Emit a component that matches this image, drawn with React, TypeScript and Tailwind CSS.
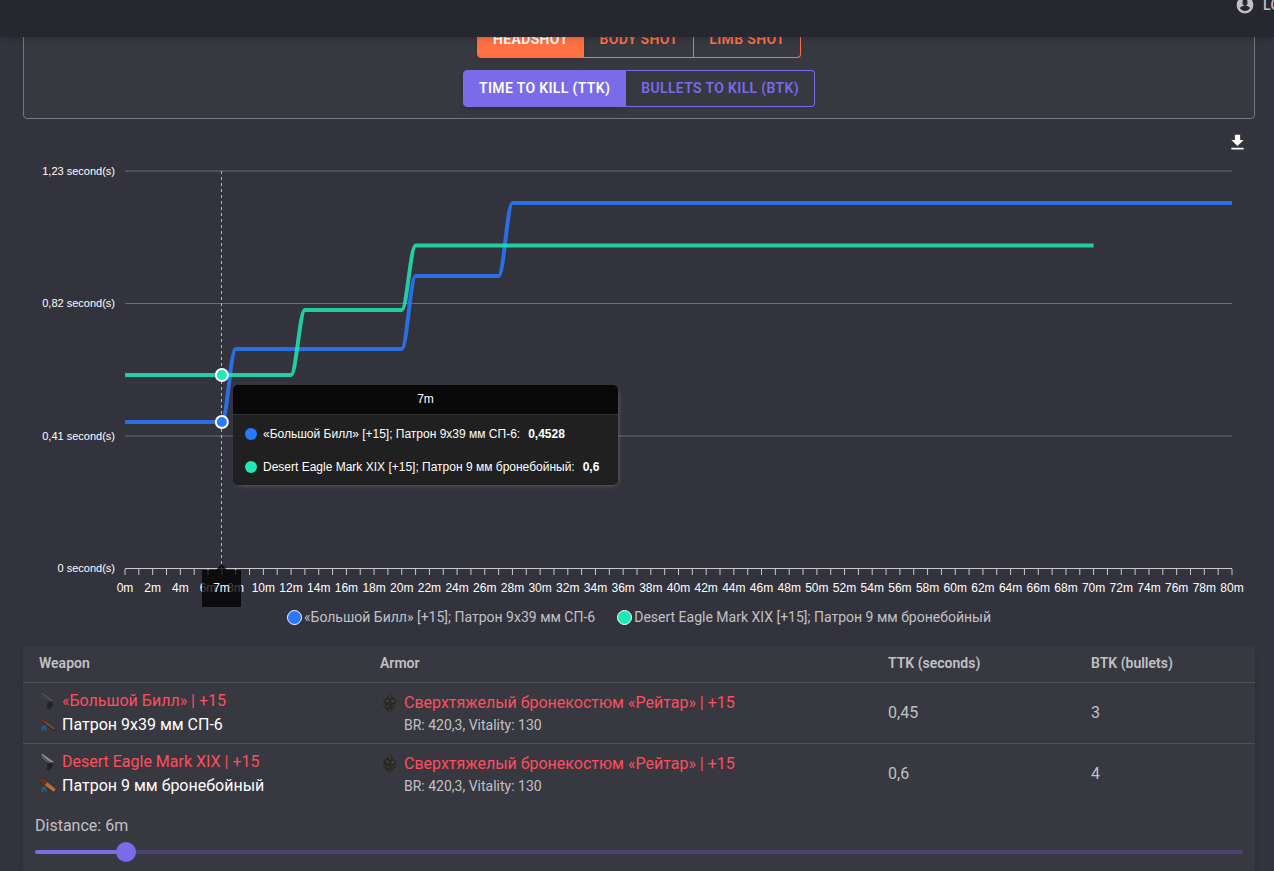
import React, { useState } from 'react';

interface Series {
  name: string;
  value: string;
  color: string;
  end: number;
  // [distance in meters, y of the plateau that starts there]
  steps: [number, number][];
}

interface ResultRow {
  weapon: string;
  ammo: string;
  armor: string;
  armorStats: string;
  ttk: string;
  btk: number;
  metal: string;
  bullet: string;
  bulletWidth: number;
}

const PLOT_LEFT = 125;
const PLOT_RIGHT = 1232;
const MAX_DISTANCE = 80;

const series: Series[] = [
  {
    name: '«Большой Билл» [+15]; Патрон 9x39 мм СП-6',
    value: '0,4528',
    color: '#2979ff',
    end: 80,
    steps: [[0, 422], [8, 349], [21, 276], [28, 203]],
  },
  {
    name: 'Desert Eagle Mark XIX [+15]; Патрон 9 мм бронебойный',
    value: '0,6',
    color: '#1de9b6',
    end: 70,
    steps: [[0, 375], [13, 310], [21, 245.5]],
  },
];

const gridLines = [
  { y: 171, label: '1,23 second(s)' },
  { y: 303.5, label: '0,82 second(s)' },
  { y: 436, label: '0,41 second(s)' },
  { y: 568.5, label: '0 second(s)' },
];

const rows: ResultRow[] = [
  {
    weapon: '«Большой Билл» | +15',
    ammo: 'Патрон 9x39 мм СП-6',
    armor: 'Сверхтяжелый бронекостюм «Рейтар» | +15',
    armorStats: 'BR: 420,3, Vitality: 130',
    ttk: '0,45',
    btk: 3,
    metal: '#4d4d50',
    bullet: '#7d4a35',
    bulletWidth: 2,
  },
  {
    weapon: 'Desert Eagle Mark XIX | +15',
    ammo: 'Патрон 9 мм бронебойный',
    armor: 'Сверхтяжелый бронекостюм «Рейтар» | +15',
    armorStats: 'BR: 420,3, Vitality: 130',
    ttk: '0,6',
    btk: 4,
    metal: '#8b8b90',
    bullet: '#b06f3c',
    bulletWidth: 4,
  },
];

const toX = (meters: number) =>
  PLOT_LEFT + (meters / MAX_DISTANCE) * (PLOT_RIGHT - PLOT_LEFT);

const buildPath = ({ steps, end }: Series) => {
  let d = `M${toX(0)} ${steps[0][1]}`;
  for (let i = 1; i < steps.length; i++) {
    const [meters, y] = steps[i];
    const prevY = steps[i - 1][1];
    const from = toX(meters - 1);
    const to = toX(meters);
    d += ` H${from} C${from + 5} ${prevY} ${to - 5} ${y} ${to} ${y}`;
  }
  return `${d} H${toX(end)}`;
};

const AccountIcon = () => (
  <svg viewBox="0 0 24 24" className="size-5" fill="currentColor" aria-hidden="true">
    <path d="M12 2C6.48 2 2 6.48 2 12s4.48 10 10 10 10-4.48 10-10S17.52 2 12 2zm0 3c1.66 0 3 1.34 3 3v2c0 1.66-1.34 3-3 3s-3-1.34-3-3V8c0-1.66 1.34-3 3-3zm0 14.2c-2.5 0-4.71-1.28-6-3.22.03-1.99 4-3.08 6-3.08s5.97 1.09 6 3.08c-1.29 1.94-3.5 3.22-6 3.22z" />
  </svg>
);

const DownloadIcon = () => (
  <svg viewBox="0 0 24 24" className="size-[21px]" fill="currentColor" aria-hidden="true">
    <path d="M19 9h-4V3H9v6H5l7 7 7-7zM5 18v2h14v-2H5z" />
  </svg>
);

const PistolIcon = ({ metal }: { metal: string }) => (
  <svg viewBox="0 0 18 20" className="h-5 w-[18px] shrink-0" aria-hidden="true">
    <path d="M2.5 2.5l1.2-.6L14.500 9.600l-.6 2.800-2.200.4L3 5.200z" fill={metal} />
    <path d="M3 4l9 7.500" stroke="#2b2b2e" strokeWidth="1" />
    <path d="M9 11l4.800-.8.200 3-2.500 5.300-4.200-1.600z" fill="#242426" />
    <path d="M7 10.500l2 1.500" stroke="#2b2b2e" strokeWidth="1" />
  </svg>
);

const BulletIcon = ({ color, width }: { color: string; width: number }) => (
  <svg viewBox="0 0 18 20" className="h-5 w-[18px] shrink-0" aria-hidden="true">
    <path d="M3 5l11.500 9" stroke="#3a2822" strokeWidth={width + 1.4} strokeLinecap="round" />
    <path d="M3.500 5l11 8.500" stroke={color} strokeWidth={width} strokeLinecap="round" />
    <path d="M2.500 4.500l3 2.200" stroke="#6d2e22" strokeWidth={width} strokeLinecap="round" />
    <path d="M2.500 16v-4l1.500-1.200h2.500l1 1.200v4H5.800v-2H4.400v2z" fill="#1f5f86" />
  </svg>
);

const ArmorIcon = () => (
  <svg viewBox="0 0 20 22" className="h-[22px] w-5 shrink-0" aria-hidden="true">
    <path d="M7.500 3.500L9 2h2l1.500 1.500.3 2L14.800 7l1 3.500-.6 3.500-1.600 2.500-1.400 2L9.500 20l-2.800-2L4.500 15.500 3.200 13l.6-2.500L3.600 8 6.800 5.500z" fill="#292926" />
    <path d="M8.500 3h2.200v1.600H8.500zM6.500 7.500l2 .6v2l-2-.5zM11.500 8.500l2.200-.6.200 2-2.400.8z" fill="#4d4a40" />
    <path d="M7.500 13h1.500v2.500H7.500zM11.500 13.500l1.500.2-.6 2h-1z" fill="#3f3d36" />
    <path d="M4.200 13l1.400 1M14.500 12.500l-1 .8M9 17.500l1.600.8M9.500 6h1.500" stroke="#514d42" strokeWidth="1" />
  </svg>
);

const TtkChart = () => {
  const ticks = Array.from({ length: MAX_DISTANCE + 1 }, (_, i) => i);

  return (
    <div className="relative font-['Liberation_Sans',Arial,sans-serif]">
      <svg viewBox="23 119 1232 489" className="block w-full" role="img" aria-label="Time to kill by distance">
        {gridLines.map(line => (
          <g key={line.label}>
            <line x1={PLOT_LEFT} x2={PLOT_RIGHT} y1={line.y} y2={line.y} stroke="#6b6b73" strokeWidth="1" />
            <text x="115" y={Math.floor(line.y) + 4} textAnchor="end" fontSize="11" fill="#fff">
              {line.label}
            </text>
          </g>
        ))}

        {/* X axis */}
        <line x1={PLOT_LEFT} x2={PLOT_RIGHT} y1="568.5" y2="568.5" stroke="#c9c9cc" strokeWidth="1" />
        {ticks.map(m => (
          <g key={m}>
            <line x1={toX(m)} x2={toX(m)} y1="569" y2="575" stroke="#c9c9cc" strokeWidth="1" />
            {m % 2 === 0 && (
              <text x={toX(m)} y="592" textAnchor="middle" fontSize="12" fill="#fff">
                {m}m
              </text>
            )}
          </g>
        ))}

        <line x1="221.5" x2="221.5" y1="171" y2="568" stroke="#b6b6bb" strokeWidth="1" strokeDasharray="3" />

        {series.map(s => (
          <path key={s.name} d={buildPath(s)} fill="none" stroke={s.color} strokeWidth="4" strokeOpacity="0.85" />
        ))}
        {series.map(s => (
          <circle key={s.name} cx={toX(7)} cy={s.steps[0][1]} r="6" fill={s.color} stroke="#fff" strokeWidth="2" />
        ))}

        {/* Crosshair label */}
        <path d="M202 570h14l5.500-6 5.500 6h14v37h-39z" fill="#000" fillOpacity="0.75" />
        <text x="221.5" y="592" textAnchor="middle" fontSize="12" fill="#fff">
          7m
        </text>
      </svg>

      <button type="button" aria-label="Download chart" className="absolute top-[13px] right-[7px] text-white">
        <DownloadIcon />
      </button>

      <div className="absolute top-[266px] left-[210px] min-w-[385px] overflow-hidden rounded-[5px] bg-[#1e1e1e]/90 text-xs text-white shadow-[2px_2px_6px_-4px_#999]">
        <div className="border-b border-[#333] bg-black/70 py-[7px] text-center leading-[15px]">7m</div>
        <div className="px-3 pt-[3px] pb-0.5">
          {series.map(s => (
            <div key={s.name} className="flex h-8 items-center not-first:mt-px">
              <span className="mr-[6px] size-3 rounded-full" style={{ backgroundColor: s.color }} />
              <span>{s.name}:</span>
              <span className="ml-2 font-bold">{s.value}</span>
            </div>
          ))}
        </div>
      </div>
    </div>
  );
};

const App: React.FC = () => {
  const [distance, setDistance] = useState(6);

  return (
    <div className="min-h-screen overflow-hidden bg-[#33333d] font-[Roboto,sans-serif] text-[#c1c1c5]">
      <header className="relative z-10 -mt-7 flex h-[65px] items-center justify-end bg-[#272730] shadow-md">
        <a href="#login" className="-mr-[31px] flex items-center gap-2 text-sm font-medium tracking-wide">
          <AccountIcon />
          LOGIN
        </a>
      </header>

      <main className="pr-[19px] pl-[23px]">
        <section className="-mt-[33px] flex flex-col items-center gap-3 rounded-sm border border-[#77777d] bg-[#383840] pt-4 pb-[11px] text-sm font-semibold tracking-wide">
          <div className="flex h-[37px] rounded-sm text-[#ff7043]">
            <button type="button" className="rounded-l-sm border border-[#ff7043] bg-[#ff7043] px-[15px] pb-0.5 text-white shadow-md">HEADSHOT</button>
            <button type="button" className="border-y border-r border-[#ff7043] px-[15px] pb-0.5">BODY SHOT</button>
            <button type="button" className="rounded-r-sm border-y border-r border-[#ff7043] px-[15px] pb-0.5">LIMB SHOT</button>
          </div>
          <div className="flex h-[37px] rounded-sm text-[#7a6be8]">
            <button type="button" className="rounded-l-sm border border-[#7a6be8] bg-[#7a6be8] px-[15px] pb-0.5 text-white shadow-md">TIME TO KILL (TTK)</button>
            <button type="button" className="rounded-r-sm border-y border-r border-[#7a6be8] px-[15px] pb-0.5">BULLETS TO KILL (BTK)</button>
          </div>
        </section>

        <TtkChart />

        <ul className="flex h-[38px] justify-center gap-[22px] pb-5 text-sm leading-[18px]">
          {series.map(s => (
            <li key={s.name} className="flex items-center gap-[2px]">
              <span className="size-[15px] rounded-full border border-white" style={{ backgroundColor: s.color }} />
              {s.name}
            </li>
          ))}
        </ul>

        <section className="rounded-sm bg-[#383840] pb-2.5 shadow-md">
          <table className="w-full border-collapse text-left">
            <thead className="text-sm leading-6">
              <tr className="border-b border-[#515155]">
                <th className="w-[341px] px-4 pt-[5px] pb-[7px] font-semibold">Weapon</th>
                <th className="w-[508px] px-4 pt-[5px] pb-[7px] font-semibold">Armor</th>
                <th className="w-[203px] px-4 pt-[5px] pb-[7px] font-semibold">TTK (seconds)</th>
                <th className="w-[180px] px-4 pt-[5px] pb-[7px] font-semibold">BTK (bullets)</th>
              </tr>
            </thead>
            <tbody>
              {rows.map(row => (
                <tr key={row.weapon} className="border-b border-[#515155] last:border-b-0">
                  <td className="px-4 py-1.5">
                    <div className="flex items-center gap-[5px] text-[#ff4d5e]">
                      <PistolIcon metal={row.metal} />
                      {row.weapon}
                    </div>
                    <div className="flex items-center gap-[5px] text-white">
                      <BulletIcon color={row.bullet} width={row.bulletWidth} />
                      {row.ammo}
                    </div>
                  </td>
                  <td className="px-4 py-1.5">
                    <div className="flex items-center gap-1 text-[#ff4d5e]">
                      <ArmorIcon />
                      {row.armor}
                    </div>
                    <div className="pl-6 text-sm">{row.armorStats}</div>
                  </td>
                  <td className="px-4 py-1.5">{row.ttk}</td>
                  <td className="px-4 py-1.5">{row.btk}</td>
                </tr>
              ))}
            </tbody>
          </table>

          <div className="px-3 pt-[10px]">
            <label htmlFor="distance">Distance: {distance}m</label>
            <div className="relative mt-1 flex h-5 items-center">
              <div className="h-1 w-full overflow-hidden rounded-full bg-[#4c4474]">
                <div className="h-full bg-[#7a6be8]" style={{ width: `${(distance / MAX_DISTANCE) * 100}%` }} />
              </div>
              <input
                id="distance"
                type="range"
                min={0}
                max={MAX_DISTANCE}
                value={distance}
                onChange={e => setDistance(Number(e.target.value))}
                className="absolute inset-y-0 -left-2.5 w-[calc(100%+20px)] cursor-pointer appearance-none bg-transparent [&::-webkit-slider-thumb]:size-5 [&::-webkit-slider-thumb]:appearance-none [&::-webkit-slider-thumb]:rounded-full [&::-webkit-slider-thumb]:bg-[#7a6be8]"
              />
            </div>
          </div>
        </section>
      </main>
    </div>
  );
};

export default App;
